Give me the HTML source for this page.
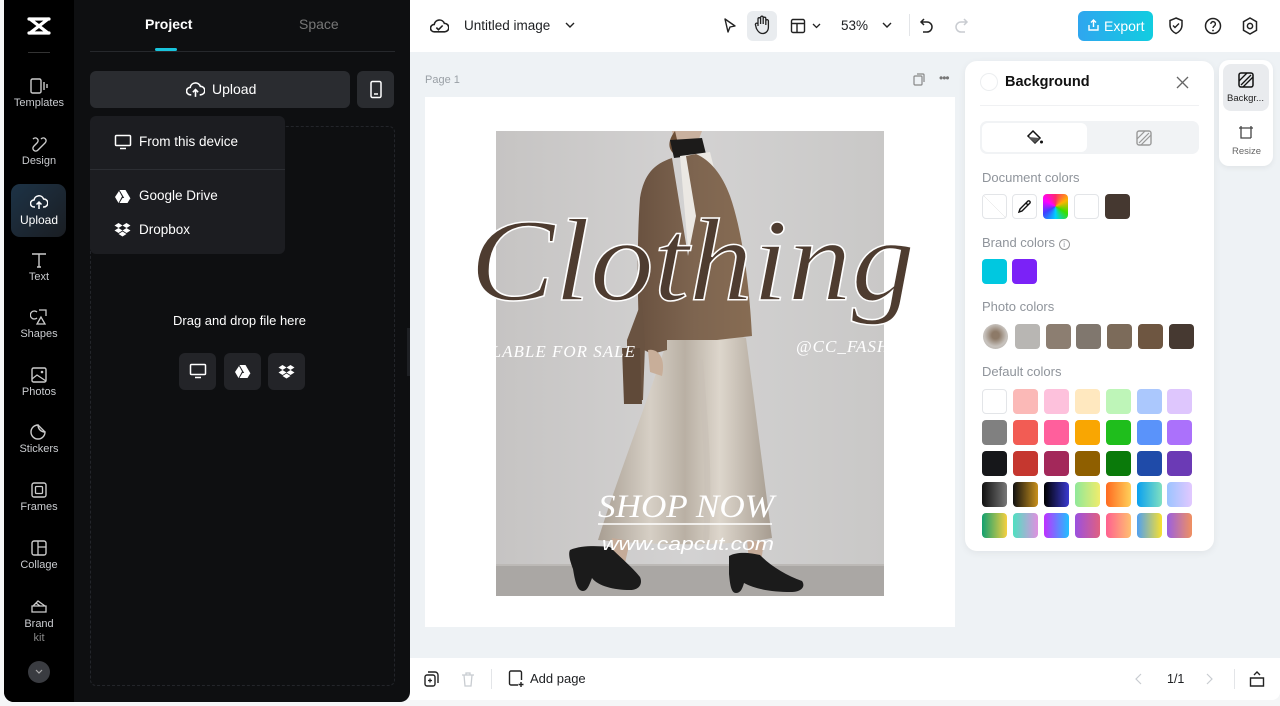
<!DOCTYPE html>
<html><head><meta charset="utf-8">
<style>
*{box-sizing:border-box;margin:0;padding:0}
body{width:1280px;height:706px;overflow:hidden;background:#f5f6f7;font-family:"Liberation Sans",sans-serif;position:relative}
.abs{position:absolute}
.dark{left:4px;top:0;width:406px;height:702px;background:#0e0f11;border-radius:0 0 10px 10px;overflow:hidden}
.rail{left:4px;top:0;width:70px;height:702px;background:#000;border-radius:0 0 0 10px}
.ri{position:absolute;left:0;width:70px;text-align:center;color:#c9cbcf;font-size:11px}
.ri svg{display:block;margin:0 auto 3px}
.sw{position:absolute;width:25px;height:25px;border-radius:4px}
.lbl{position:absolute;left:982px;font-size:13px;color:#8f949b}
.t{color:#1d1f22;font-size:13px}
</style></head><body>
<div class="abs dark"></div>
<div class="abs rail"></div>
<svg class="abs" style="left:27px;top:16px" width="24" height="20" viewBox="0 0 24 20"><path d="M2 3h20M2 17h20M3 3l18 14M21 3L3 17" stroke="#fff" stroke-width="3.2" fill="none" stroke-linecap="round"/></svg>
<div class="abs" style="left:28px;top:52px;width:22px;height:1px;background:#333"></div>
<div class="ri" style="left:4px;top:78px"><svg width="18" height="16" viewBox="0 0 18 16"><rect x="1" y="1" width="10" height="14" rx="1.5" stroke="#ccc" fill="none" stroke-width="1.4"/><path d="M14 4v8M17 6v4" stroke="#ccc" stroke-width="1.4"/></svg>Templates</div>
<div class="ri" style="left:4px;top:136px"><svg width="18" height="16" viewBox="0 0 18 16"><path d="M3 3c3-3 7 1 4 4L4 10c-3 3 1 7 4 4l7-7c3-3-1-7-4-4" stroke="#ccc" fill="none" stroke-width="1.4"/></svg>Design</div>
<div class="abs" style="left:11px;top:184px;width:55px;height:53px;border-radius:9px;background:linear-gradient(135deg,#1d3346,#1a1d22)"></div>
<div class="ri" style="left:4px;top:194px;color:#fff;font-size:12px"><svg width="18" height="16" viewBox="0 0 18 16"><path d="M5 13H4a3.5 3.5 0 010-7 5 5 0 019.6-1A3.5 3.5 0 0114 13h-1M9 8v7M6.5 10.5L9 8l2.5 2.5" stroke="#fff" fill="none" stroke-width="1.5"/></svg>Upload</div>
<div class="ri" style="left:4px;top:252px"><svg width="18" height="16" viewBox="0 0 18 16"><path d="M2 2h14M9 2v13M7 15h4" stroke="#ccc" fill="none" stroke-width="1.4"/></svg>Text</div>
<div class="ri" style="left:4px;top:309px"><svg width="18" height="16" viewBox="0 0 18 16"><path d="M7 3a4 4 0 100 6M9 1h7v6M11 8l-4 7h8z" stroke="#ccc" fill="none" stroke-width="1.3"/></svg>Shapes</div>
<div class="ri" style="left:4px;top:367px"><svg width="18" height="16" viewBox="0 0 18 16"><rect x="2" y="1" width="14" height="14" rx="1.5" stroke="#ccc" fill="none" stroke-width="1.4"/><path d="M2 12l5-4 9 6" stroke="#ccc" fill="none" stroke-width="1.3"/><circle cx="12" cy="5" r="1.3" fill="#ccc"/></svg>Photos</div>
<div class="ri" style="left:4px;top:424px"><svg width="18" height="16" viewBox="0 0 18 16"><path d="M15 8A7 7 0 118 1c0 4 3 7 7 7zM8 1l7 7" stroke="#ccc" fill="none" stroke-width="1.4"/></svg>Stickers</div>
<div class="ri" style="left:4px;top:482px"><svg width="18" height="16" viewBox="0 0 18 16"><rect x="2" y="1" width="14" height="14" rx="2" stroke="#ccc" fill="none" stroke-width="1.4"/><rect x="5.5" y="4.5" width="7" height="7" rx="1" stroke="#ccc" fill="none" stroke-width="1.3"/></svg>Frames</div>
<div class="ri" style="left:4px;top:540px"><svg width="18" height="16" viewBox="0 0 18 16"><rect x="2" y="1" width="14" height="14" rx="2" stroke="#ccc" fill="none" stroke-width="1.4"/><path d="M8 1v14M8 7h8" stroke="#ccc" stroke-width="1.3"/></svg>Collage</div>
<div class="ri" style="left:4px;top:598px;line-height:14px"><svg width="18" height="16" viewBox="0 0 18 16"><path d="M2 8h14v6H2zM3 8l5-5 7 5M6 5l4 3" stroke="#ccc" fill="none" stroke-width="1.3"/></svg>Brand<br><span style="color:#888">kit</span></div>
<div class="abs" style="left:28px;top:661px;width:22px;height:22px;border-radius:50%;background:#3a3c41"></div>
<svg class="abs" style="left:34px;top:668px" width="10" height="8"><path d="M2 2l3 3 3-3" stroke="#aaa" fill="none" stroke-width="1.2"/></svg>

<div class="abs" style="left:145px;top:16px;color:#fff;font-size:14px;font-weight:bold">Project</div>
<div class="abs" style="left:299px;top:16px;color:#777;font-size:14px">Space</div>
<div class="abs" style="left:155px;top:48px;width:22px;height:3px;background:#19c4dc;border-radius:2px"></div>
<div class="abs" style="left:90px;top:51px;width:305px;height:1px;background:#26282c"></div>
<div class="abs" style="left:90px;top:71px;width:260px;height:37px;background:#2a2c30;border-radius:6px"></div>
<svg class="abs" style="left:186px;top:81px" width="19" height="17" viewBox="0 0 18 16"><path d="M5 13H4a3.5 3.5 0 010-7 5 5 0 019.6-1A3.5 3.5 0 0114 13h-1M9 8v7M6.5 10.5L9 8l2.5 2.5" stroke="#fff" fill="none" stroke-width="1.5"/></svg>
<div class="abs" style="left:212px;top:81px;color:#fff;font-size:14px">Upload</div>
<div class="abs" style="left:357px;top:71px;width:37px;height:37px;background:#2a2c30;border-radius:6px"></div>
<svg class="abs" style="left:369px;top:80px" width="14" height="19"><rect x="2" y="1.5" width="10" height="16" rx="1.5" stroke="#fff" fill="none" stroke-width="1.5"/><path d="M5 14h4" stroke="#fff" stroke-width="1.5"/></svg>
<div class="abs" style="left:90px;top:126px;width:305px;height:560px;border:1px dashed #23252a;border-radius:6px"></div>
<div class="abs" style="left:90px;top:116px;width:195px;height:138px;background:#1c1d21;border-radius:6px"></div>
<div class="abs" style="left:90px;top:169px;width:195px;height:1px;background:#2c2e33"></div>
<svg class="abs" style="left:114px;top:134px" width="18" height="16"><rect x="1.5" y="1.5" width="15" height="10" rx="1" stroke="#fff" fill="none" stroke-width="1.5"/><path d="M6 14.5h6" stroke="#fff" stroke-width="1.5"/></svg>
<div class="abs" style="left:139px;top:134px;color:#fff;font-size:13.5px">From this device</div>
<svg class="abs" style="left:114px;top:189px" width="17" height="15" viewBox="0 0 17 15"><path d="M5.5 1h6l5 8.5h-6zM5 2l3 5.5-3.5 6.5L1 8zM5.5 14l3-5h8l-3 5z" fill="#fff"/></svg>
<div class="abs" style="left:139px;top:188px;color:#fff;font-size:13.5px">Google Drive</div>
<svg class="abs" style="left:114px;top:222px" width="17" height="15" viewBox="0 0 17 15"><path d="M4.5 1L0.5 3.5 4.5 6 8.5 3.5zM12.5 1L8.5 3.5 12.5 6 16.5 3.5zM4.5 6L0.5 8.5 4.5 11 8.5 8.5zM12.5 6L8.5 8.5 12.5 11 16.5 8.5zM4.5 12L8.5 14.5 12.5 12 8.5 9.5z" fill="#fff"/></svg>
<div class="abs" style="left:139px;top:222px;color:#fff;font-size:13.5px">Dropbox</div>
<div class="abs" style="left:173px;top:313px;color:#fff;font-size:13px">Drag and drop file here</div>
<div class="abs" style="left:179px;top:353px;width:37px;height:37px;background:#232428;border-radius:6px"></div>
<div class="abs" style="left:224px;top:353px;width:37px;height:37px;background:#232428;border-radius:6px"></div>
<div class="abs" style="left:268px;top:353px;width:37px;height:37px;background:#232428;border-radius:6px"></div>
<svg class="abs" style="left:189px;top:363px" width="18" height="16"><rect x="1.5" y="1.5" width="15" height="10" rx="1" stroke="#fff" fill="none" stroke-width="1.5"/><path d="M6 14.5h6" stroke="#fff" stroke-width="1.5"/></svg>
<svg class="abs" style="left:234px;top:364px" width="17" height="15" viewBox="0 0 17 15"><path d="M5.5 1h6l5 8.5h-6zM5 2l3 5.5-3.5 6.5L1 8zM5.5 14l3-5h8l-3 5z" fill="#fff"/></svg>
<svg class="abs" style="left:278px;top:364px" width="17" height="15" viewBox="0 0 17 15"><path d="M4.5 1L0.5 3.5 4.5 6 8.5 3.5zM12.5 1L8.5 3.5 12.5 6 16.5 3.5zM4.5 6L0.5 8.5 4.5 11 8.5 8.5zM12.5 6L8.5 8.5 12.5 11 16.5 8.5zM4.5 12L8.5 14.5 12.5 12 8.5 9.5z" fill="#fff"/></svg>
<div class="abs" style="left:407px;top:328px;width:9px;height:48px;background:#1e2024;border-radius:0 5px 5px 0"></div>

<div class="abs" style="left:410px;top:0;width:870px;height:52px;background:#fff"></div>
<svg class="abs" style="left:430px;top:17px" width="19" height="17" viewBox="0 0 18 16"><path d="M5 14H4a3.5 3.5 0 010-7 5 5 0 019.6-1A3.5 3.5 0 0114 14H5M6 10l2 2 4-4" stroke="#222" fill="none" stroke-width="1.5"/></svg>
<div class="abs t" style="left:464px;top:18px;font-size:13.5px">Untitled image</div>
<svg class="abs" style="left:565px;top:21px" width="10" height="8"><path d="M1 2l4 4 4-4" stroke="#222" fill="none" stroke-width="1.4"/></svg>
<svg class="abs" style="left:722px;top:17px" width="16" height="18"><path d="M3 2l10 7-5 1-2 5z" stroke="#222" fill="none" stroke-width="1.4" stroke-linejoin="round"/></svg>
<div class="abs" style="left:747px;top:11px;width:30px;height:30px;background:#e9ecef;border-radius:6px"></div>
<svg class="abs" style="left:753px;top:15px" width="18" height="20" viewBox="0 0 18 20"><path d="M5 11V4a1.3 1.3 0 012.6 0v5V2.5a1.3 1.3 0 012.6 0V9V3.5a1.3 1.3 0 012.6 0V10V6a1.3 1.3 0 012.6 0v6c0 4-2.5 6.5-6 6.5-3 0-4.5-2-6-5L2.5 10a1.3 1.3 0 012.5-1" stroke="#222" fill="none" stroke-width="1.3"/></svg>
<svg class="abs" style="left:790px;top:18px" width="16" height="16"><rect x="1.5" y="1.5" width="13" height="13" rx="1.5" stroke="#222" fill="none" stroke-width="1.4"/><path d="M1.5 5.5h13M7 5.5v9" stroke="#222" stroke-width="1.4"/></svg>
<svg class="abs" style="left:812px;top:22px" width="10" height="8"><path d="M1 2l3.5 3.5L8 2" stroke="#222" fill="none" stroke-width="1.3"/></svg>
<div class="abs t" style="left:841px;top:18px;font-size:13.5px">53%</div>
<svg class="abs" style="left:882px;top:21px" width="10" height="8"><path d="M1 2l4 4 4-4" stroke="#222" fill="none" stroke-width="1.4"/></svg>
<div class="abs" style="left:909px;top:14px;width:1px;height:22px;background:#e3e5e8"></div>
<svg class="abs" style="left:919px;top:17px" width="16" height="18"><path d="M5 2L2 5l3 3M2 5h6a5 5 0 010 10H4" stroke="#222" fill="none" stroke-width="1.5"/></svg>
<svg class="abs" style="left:953px;top:17px" width="16" height="18"><path d="M11 2l3 3-3 3M14 5H8a5 5 0 000 10h4" stroke="#c9ccd1" fill="none" stroke-width="1.5"/></svg>
<div class="abs" style="left:1078px;top:11px;width:75px;height:30px;border-radius:6px;background:linear-gradient(90deg,#2fa6ef,#11cde0)"></div>
<svg class="abs" style="left:1087px;top:18px" width="13" height="14"><path d="M6.5 9V2M4 4.5l2.5-2.5L9 4.5M2 7v5h9V7" stroke="#fff" fill="none" stroke-width="1.4"/></svg>
<div class="abs" style="left:1104px;top:18px;color:#fff;font-size:14px">Export</div>
<svg class="abs" style="left:1167px;top:16px" width="18" height="20"><path d="M9 2l6 2.5V9c0 4-2.8 7-6 8.5C5.8 16 3 13 3 9V4.5z" stroke="#222" fill="none" stroke-width="1.5"/><path d="M6 9.5l2 2 4-4" stroke="#222" fill="none" stroke-width="1.4"/></svg>
<svg class="abs" style="left:1204px;top:17px" width="18" height="18"><circle cx="9" cy="9" r="7.5" stroke="#222" fill="none" stroke-width="1.5"/><path d="M6.8 7a2.3 2.3 0 114 1.5c-1 .8-1.8 1.2-1.8 2.5" stroke="#222" fill="none" stroke-width="1.4"/><circle cx="9" cy="13.5" r=".9" fill="#222"/></svg>
<svg class="abs" style="left:1241px;top:16px" width="18" height="20"><path d="M9 2l6.5 3.7v8.6L9 18l-6.5-3.7V5.7z" stroke="#222" fill="none" stroke-width="1.5"/><circle cx="9" cy="10" r="2.6" stroke="#222" fill="none" stroke-width="1.5"/></svg>

<div class="abs" style="left:410px;top:52px;width:870px;height:606px;background:#eef2f5"></div>
<div class="abs" style="left:425px;top:74px;color:#9aa0a6;font-size:11px">Page 1</div>
<svg class="abs" style="left:913px;top:73px" width="12" height="13"><rect x="1" y="3" width="8" height="9" rx="1" stroke="#888" fill="none" stroke-width="1.2"/><path d="M4 1h6a1 1 0 011 1v7" stroke="#888" fill="none" stroke-width="1.2"/></svg>
<div class="abs" style="left:939px;top:71px;color:#777;font-size:12px;letter-spacing:-1px">•••</div>
<div class="abs" style="left:425px;top:97px;width:530px;height:530px;background:#fff"></div>

<svg class="abs" style="left:425px;top:97px;overflow:visible" width="530" height="530" viewBox="425 97 530 530">
<defs>
<linearGradient id="wall" x1="0" y1="0" x2="1" y2="0"><stop offset="0" stop-color="#c6c4c3"/><stop offset=".5" stop-color="#d3d2d2"/><stop offset="1" stop-color="#c9c8c7"/></linearGradient>
<linearGradient id="skirt" x1="0" y1="0" x2="1" y2="0"><stop offset="0" stop-color="#a89e92"/><stop offset=".3" stop-color="#d6cfc5"/><stop offset=".5" stop-color="#b9b0a4"/><stop offset=".7" stop-color="#ddd6cc"/><stop offset="1" stop-color="#a69c90"/></linearGradient>
<linearGradient id="jk" x1="0" y1="0" x2="1" y2="0"><stop offset="0" stop-color="#6a5240"/><stop offset=".5" stop-color="#7e6550"/><stop offset="1" stop-color="#876c53"/></linearGradient>
<clipPath id="img"><rect x="496" y="131" width="388" height="465"/></clipPath>
</defs>
<g clip-path="url(#img)">
<rect x="496" y="131" width="388" height="465" fill="url(#wall)"/>
<rect x="496" y="566" width="388" height="30" fill="#aaa7a4"/>
<path d="M496 565h388" stroke="#bcb9b6" stroke-width="2"/>
<!-- hair/head -->
<path d="M672 131h30l-3 8-25 2z" fill="#c9b19f"/>
<path d="M675 131c-6 8-8 16-2 22l6-5z" fill="#6e4f36"/>
<!-- turtleneck -->
<path d="M670 140l32-2 4 16-32 4z" fill="#1c1b1a"/>
<!-- shirt -->
<path d="M680 156l30-4 10 40-4 150-20 0z" fill="#ebe8e3"/>
<!-- skirt -->
<path d="M668 338c30-6 60-6 78 0 8 60 18 140 26 200-40 8-110 8-174 2 22-70 50-140 70-202z" fill="url(#skirt)"/>
<path d="M700 360c5 60 10 120 6 180" stroke="#c8c0b5" stroke-width="6" fill="none" opacity=".6"/>
<!-- jacket -->
<path d="M672 158c-18 6-28 16-32 40-3 40-3 100 0 150l12 6 15-4 0-10 20 0 30 0 35-4c-2-40-8-100-22-140-8-22-20-36-34-42l-10 2 10 60-8 40z" fill="url(#jk)"/>
<path d="M642 300l-15 40 0 60 16 0 2-55z" fill="#6a5341"/>
<path d="M622 348h18l2 56h-18z" fill="#604a39"/>
<path d="M648 350c10-2 18 8 14 26l-12-4z" fill="#c8ae99"/>
<!-- legs -->
<path d="M612 538l18 3-5 22h-12z" fill="#c5ab98"/>
<path d="M747 540l17 2-3 20h-12z" fill="#c5ab98"/>
<!-- shoes -->
<path d="M570 550c12-5 28-4 40-3 10 10 22 20 30 30 3 7-1 13-10 13-16 0-32-4-38-12-3 8-5 13-9 13-6 0-8-10-10-22-3-8-5-15-3-19z" fill="#1b1b1b"/>
<path d="M729 556c9-5 22-3 31-1 12 12 26 20 42 26 4 6-1 11-11 11-20 0-36-3-47-9-2 7-4 10-8 10-5 0-6-9-7-19z" fill="#1b1b1b"/>
<text x="636" y="357" font-family="Liberation Serif,serif" font-style="italic" font-size="17" fill="#fff" text-anchor="end" letter-spacing="1">AVAILABLE FOR SALE</text>
<text x="796" y="352" font-family="Liberation Serif,serif" font-style="italic" font-size="17" fill="#fff" letter-spacing="1">@CC_FASHION</text>
</g>
<text x="470" y="300" font-family="Liberation Serif,serif" font-style="italic" font-size="118" fill="#4e3c30" stroke="#fff" stroke-width="1.5" textLength="445" lengthAdjust="spacingAndGlyphs">Clothing</text>
<text x="686" y="517" font-family="Liberation Serif,serif" font-style="italic" font-size="33" fill="#fff" text-anchor="middle" textLength="176" lengthAdjust="spacingAndGlyphs">SHOP NOW</text>
<path d="M598 524h174" stroke="#fff" stroke-width="1.5"/>
<text x="688" y="550" font-family="Liberation Sans,sans-serif" font-style="italic" font-size="18" fill="#fff" text-anchor="middle" textLength="172" lengthAdjust="spacingAndGlyphs">www.capcut.com</text>
</svg>

<div class="abs" style="left:965px;top:61px;width:249px;height:490px;background:#fff;border-radius:12px;box-shadow:0 2px 8px rgba(0,0,0,.06)"></div>
<div class="abs" style="left:980px;top:73px;width:18px;height:18px;border-radius:50%;border:1px solid #eceef0"></div>
<div class="abs" style="left:1005px;top:74px;font-size:14.5px;font-weight:bold;color:#111">Background</div>
<svg class="abs" style="left:1176px;top:76px" width="13" height="13"><path d="M1 1l11 11M12 1L1 12" stroke="#666" stroke-width="1.3"/></svg>
<div class="abs" style="left:980px;top:105px;width:219px;height:1px;background:#f0f1f3"></div>
<div class="abs" style="left:980px;top:121px;width:219px;height:33px;background:#f1f3f5;border-radius:7px"></div>
<div class="abs" style="left:982px;top:123px;width:105px;height:29px;background:#fff;border-radius:6px"></div>
<svg class="abs" style="left:1026px;top:129px" width="18" height="17"><path d="M7 2l7 7-5 5-7-7z" stroke="#111" fill="none" stroke-width="1.5"/><path d="M2 8l7 6 5-5z" fill="#555"/><circle cx="15.5" cy="13" r="1.5" fill="#111"/></svg>
<svg class="abs" style="left:1136px;top:130px" width="16" height="16"><rect x="1" y="1" width="14" height="14" rx="2" stroke="#999" fill="none" stroke-width="1.4"/><path d="M1 9L9 1M5 15L15 5M3 13L13 3" stroke="#999" stroke-width="1.2"/></svg>
<div class="lbl" style="top:170px">Document colors</div>
<div class="sw" style="left:982px;top:194px;border:1px solid #e3e5e8;background:linear-gradient(45deg,transparent 49%,#ddd 50%,transparent 51%)"></div>
<div class="sw" style="left:1012px;top:194px;border:1px solid #e3e5e8"></div>
<svg class="abs" style="left:1017px;top:199px" width="15" height="15"><path d="M2 13l1-3 6-6 2 2-6 6zM9 4l2-2a1.5 1.5 0 012 2l-2 2" stroke="#111" fill="none" stroke-width="1.4"/></svg>
<div class="sw" style="left:1043px;top:194px;background:conic-gradient(#ff2a6a,#ffb300,#38e000,#00d0ff,#4040ff,#ff00ff,#ff2a6a)"></div>
<div class="sw" style="left:1074px;top:194px;border:1px solid #e3e5e8;background:#fff"></div>
<div class="sw" style="left:1105px;top:194px;background:#453830"></div>
<div class="lbl" style="top:235px">Brand colors <span style="border:1px solid #999;border-radius:50%;display:inline-block;width:11px;height:11px;line-height:9px;text-align:center;font-size:8px">i</span></div>
<div class="sw" style="left:982px;top:259px;background:#00c8e0"></div>
<div class="sw" style="left:1012px;top:259px;background:#7b22f7"></div>
<div class="lbl" style="top:299px">Photo colors</div>
<div class="sw" style="left:983px;top:324px;border-radius:50%;background:radial-gradient(circle at 50% 45%,#8d7a68 20%,#c7c2bd 60%,#b5b0ab)"></div>
<div class="sw" style="left:1015px;top:324px;background:#b8b6b3"></div>
<div class="sw" style="left:1046px;top:324px;background:#8c7e71"></div>
<div class="sw" style="left:1076px;top:324px;background:#80776e"></div>
<div class="sw" style="left:1107px;top:324px;background:#7c6b5a"></div>
<div class="sw" style="left:1138px;top:324px;background:#6e5641"></div>
<div class="sw" style="left:1169px;top:324px;background:#463931"></div>
<div class="lbl" style="top:364px">Default colors</div>
<div id="grid"></div>
<script>
var c=[["#fff","#fbb9b7","#fdc1dc","#ffe8bf","#bef5b8","#abc8fd","#dec6fd"],
["#808080","#f25c54","#ff5f9c","#f9a602","#1fbe1c","#5a93fa","#ab71fb"],
["#16171a","#c5372f","#a3285a","#8f5f00","#0a7a0a","#1f4ba9","#6b3ab5"],
["linear-gradient(90deg,#111,#777)","linear-gradient(90deg,#111,#c8901c)","linear-gradient(90deg,#000,#3a3ad0)","linear-gradient(90deg,#8fe89a,#f0ec6c)","linear-gradient(90deg,#ff6a20,#ffd05a)","linear-gradient(90deg,#0aa0f0,#80e0c0)","linear-gradient(90deg,#9cc4ff,#e2c8ff)"],
["linear-gradient(90deg,#12a070,#f6d040)","linear-gradient(90deg,#4ee0c0,#e090e0)","linear-gradient(90deg,#c030ff,#20c0ff)","linear-gradient(90deg,#9a50e0,#e06080)","linear-gradient(90deg,#ff6090,#ffc070)","linear-gradient(90deg,#50a0f0,#f8e030)","linear-gradient(90deg,#9a60e0,#f09060)"]];
var h="";for(var r=0;r<5;r++)for(var k=0;k<7;k++){h+='<div class="sw" style="left:'+(982+k*30.9)+'px;top:'+(389+r*31)+'px;background:'+c[r][k]+(r==0&&k==0?';border:1px solid #e3e5e8':'')+'"></div>';}
document.getElementById("grid").innerHTML=h;
</script>

<div class="abs" style="left:1219px;top:60px;width:54px;height:106px;background:#fff;border-radius:10px;box-shadow:0 2px 6px rgba(0,0,0,.06)"></div>
<div class="abs" style="left:1223px;top:64px;width:46px;height:47px;background:#e9ebee;border-radius:8px"></div>
<svg class="abs" style="left:1238px;top:72px" width="16" height="16"><rect x="1" y="1" width="14" height="14" rx="2" stroke="#111" fill="none" stroke-width="1.5"/><path d="M1 9L9 1M5 15L15 5M3 13L13 3" stroke="#111" stroke-width="1.3"/></svg>
<div class="abs" style="left:1227px;top:93px;font-size:9.5px;color:#222">Backgr...</div>
<svg class="abs" style="left:1238px;top:125px" width="16" height="16"><path d="M3 1v12h10M1 3h12v10M13 1v3M15 3h-3" stroke="#444" fill="none" stroke-width="1.3"/></svg>
<div class="abs" style="left:1232px;top:146px;font-size:9.5px;color:#666">Resize</div>

<div class="abs" style="left:410px;top:658px;width:870px;height:42px;background:#fff;border-radius:0 0 8px 0"></div>
<svg class="abs" style="left:424px;top:671px" width="15" height="16"><rect x="1" y="4" width="10" height="11" rx="2" stroke="#222" fill="none" stroke-width="1.4"/><path d="M4 1h7a3 3 0 013 3v8" stroke="#222" fill="none" stroke-width="1.4"/><path d="M6 7.5v4M4 9.5h4" stroke="#222" stroke-width="1.3"/></svg>
<svg class="abs" style="left:461px;top:671px" width="14" height="16"><path d="M1 4h12M5 4V2h4v2M3 4l1 11h6l1-11" stroke="#c8ccd1" fill="none" stroke-width="1.3"/></svg>
<div class="abs" style="left:491px;top:669px;width:1px;height:20px;background:#e3e5e8"></div>
<svg class="abs" style="left:508px;top:670px" width="17" height="18"><path d="M10 15H3a1.5 1.5 0 01-1.5-1.5v-11A1.5 1.5 0 013 1h9a1.5 1.5 0 011.5 1.5V10M13 12v5M10.5 14.5h5" stroke="#222" fill="none" stroke-width="1.4"/></svg>
<div class="abs t" style="left:530px;top:671px">Add page</div>
<svg class="abs" style="left:1135px;top:673px" width="8" height="12"><path d="M6 1L1 6l5 5" stroke="#c8ccd1" fill="none" stroke-width="1.2"/></svg>
<div class="abs t" style="left:1167px;top:672px;font-size:12.5px">1/1</div>
<svg class="abs" style="left:1205px;top:673px" width="8" height="12"><path d="M2 1l5 5-5 5" stroke="#c8ccd1" fill="none" stroke-width="1.2"/></svg>
<div class="abs" style="left:1234px;top:669px;width:1px;height:20px;background:#e3e5e8"></div>
<svg class="abs" style="left:1249px;top:670px" width="16" height="18"><path d="M1.5 8h13v8h-13zM5 5l3-3 3 3" stroke="#222" fill="none" stroke-width="1.4"/></svg>
</body></html>
